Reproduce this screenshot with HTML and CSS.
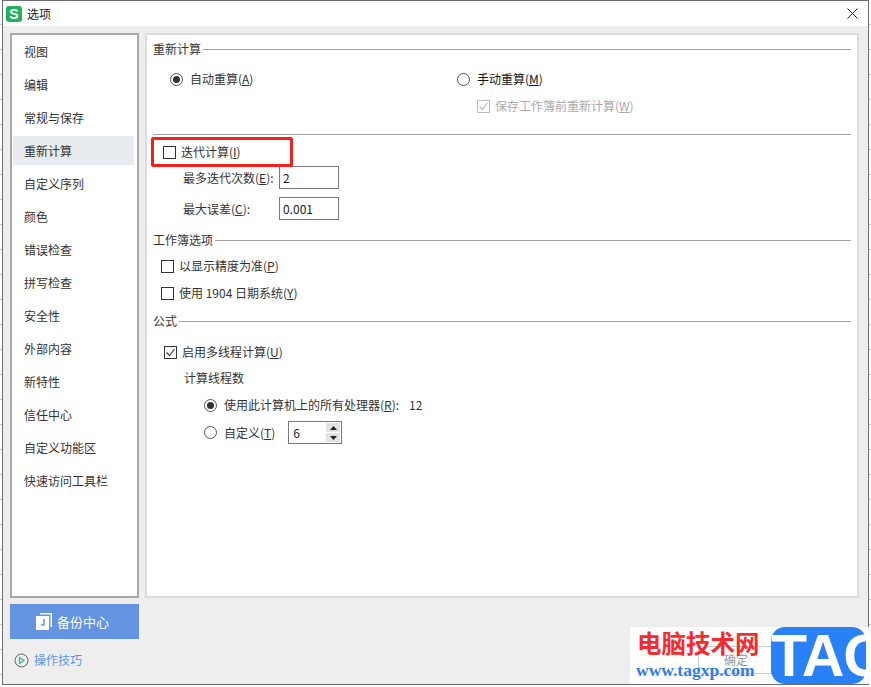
FILE: index.html
```html
<!DOCTYPE html>
<html lang="zh-CN">
<head>
<meta charset="utf-8">
<title>选项</title>
<link rel="stylesheet" href="styles.css">
</head>
<body>
<div class="dialog">
  <header class="titlebar">
    <span class="logo">S</span>
    <span class="title">选项</span>
    <svg class="close" width="11" height="11" viewBox="0 0 11 11"><path d="M.5.5l10 10M10.500.5l-10 10" stroke="#222" stroke-width="1" fill="none"/></svg>
  </header>
  <div class="body">
    <div class="left">
      <nav class="nav">
        <div class="nav-item">视图</div>
        <div class="nav-item">编辑</div>
        <div class="nav-item">常规与保存</div>
        <div class="nav-item active">重新计算</div>
        <div class="nav-item">自定义序列</div>
        <div class="nav-item">颜色</div>
        <div class="nav-item">错误检查</div>
        <div class="nav-item">拼写检查</div>
        <div class="nav-item">安全性</div>
        <div class="nav-item">外部内容</div>
        <div class="nav-item">新特性</div>
        <div class="nav-item">信任中心</div>
        <div class="nav-item">自定义功能区</div>
        <div class="nav-item">快速访问工具栏</div>
      </nav>
      <div class="backup">
        <svg width="16" height="17" viewBox="0 0 16 17"><path d="M4 0h12v14h-1.500V1.500H4z" fill="#fff"/><path d="M0 3h13v14H0z" fill="#fff"/><path d="M8 6v6H5" stroke="#6495e2" stroke-width="1.500" fill="none"/></svg>
        <span>备份中心</span>
      </div>
      <div class="tips">
        <svg width="15" height="15" viewBox="0 0 15 15"><circle cx="7.500" cy="7.500" r="6.500" fill="none" stroke="#666" stroke-width="1"/><path d="M5.500 4.500v6l4.500-3z" fill="none" stroke="#35b87c" stroke-width="1.200"/></svg>
        <span>操作技巧</span>
      </div>
    </div>
    <main class="panel">
      <div class="heading"><span>重新计算</span><i></i></div>
      <div class="row two-col mt10 ind-a">
        <label class="opt"><span class="radio on"></span>自动重算(<u>A</u>)</label>
        <label class="opt strong"><span class="radio"></span>手动重算(<u>M</u>)</label>
      </div>
      <div class="row mt7 ind-b">
        <label class="opt disabled"><span class="check checked dim"><svg width="11" height="11" viewBox="0 0 11 11"><path d="M1.500 5.500l3 3 5-6.500" stroke="#bbb" stroke-width="1.200" fill="none"/></svg></span>保存工作簿前重新计算(<u>W</u>)</label>
      </div>
      <div class="sep"></div>
      <div class="row mt7 ind-c">
        <label class="opt"><span class="check"></span>迭代计算(<u>I</u>)</label>
      </div>
      <div class="field mt4">
        <span class="field-label">最多迭代次数(<u>E</u>):</span>
        <span class="input">2</span>
      </div>
      <div class="field mt8">
        <span class="field-label">最大误差(<u>C</u>):</span>
        <span class="input">0.001</span>
      </div>
      <div class="heading mt10"><span>工作簿选项</span><i></i></div>
      <div class="row mt6 ind-d">
        <label class="opt"><span class="check"></span>以显示精度为准(<u>P</u>)</label>
      </div>
      <div class="row mt7 ind-d">
        <label class="opt"><span class="check"></span>使用 1904 日期系统(<u>Y</u>)</label>
      </div>
      <div class="heading mt8"><span>公式</span><i></i></div>
      <div class="row mt11 ind-e">
        <label class="opt"><span class="check checked"><svg width="11" height="11" viewBox="0 0 11 11"><path d="M1.500 5.500l3 3 5-6.500" stroke="#444" stroke-width="1.200" fill="none"/></svg></span>启用多线程计算(<u>U</u>)</label>
      </div>
      <div class="row mt6 ind-f">计算线程数</div>
      <div class="row mt7 ind-g">
        <label class="opt"><span class="radio on"></span>使用此计算机上的所有处理器(<u>R</u>):<span class="count">12</span></label>
      </div>
      <div class="row spin-row mt6 ind-g">
        <label class="opt"><span class="radio"></span>自定义(<u>T</u>)</label>
        <span class="spin">
          <span class="spin-val">6</span>
          <span class="spin-btns">
            <span class="spin-btn"><svg width="7" height="4" viewBox="0 0 7 4"><path d="M3.500 0L7 4H0z" fill="#222"/></svg></span>
            <span class="spin-btn"><svg width="7" height="4" viewBox="0 0 7 4"><path d="M0 0h7L3.500 4z" fill="#222"/></svg></span>
          </span>
        </span>
      </div>
      <div class="redbox"></div>
    </main>
  </div>
</div>
<div class="watermark">
  <span class="ghost-btn ghost-ok">确定</span>
  <span class="ghost-cancel">取消</span>
  <div class="wm-text">
    <div class="wm-cn">电脑技术网</div>
    <div class="wm-url">www.tagxp.com</div>
  </div>
  <div class="wm-tag">TAG</div>
</div>
</body>
</html>
```
FILE: styles.css
```css
* { box-sizing: border-box; }
html, body { margin: 0; height: 100%; }
body {
  width: 871px;
  height: 687px;
  overflow: hidden;
  position: relative;
  font: 12px/20px "Noto Sans CJK SC", "Noto Sans", sans-serif;
  color: #333;
  padding-left: 2px;
  background-color: #fff;
  background-image:
    repeating-linear-gradient(to bottom, transparent 0 24px, #c8c8c8 24px 25px);
}
u { text-underline-offset: 1px; }

.dialog {
  width: 867px;
  height: 685px;
  border: 1px solid #6e6e6e;
  background: #eee;
  display: flex;
  flex-direction: column;
}
.titlebar {
  height: 25px;
  flex: none;
  background: #fff;
  display: flex;
  align-items: center;
  padding: 0 10px 0 3px;
  margin-bottom: 7px;
}
.logo {
  width: 16px;
  height: 16px;
  border-radius: 3px;
  background: #21b25b;
  color: #fff;
  font: bold 14px/16px "Liberation Sans", sans-serif;
  text-align: center;
}
.title { margin-left: 5px; font-size: 12px; color: #222; }
.close { margin-left: auto; }

.body {
  display: grid;
  grid-template-columns: 129px 714px;
  column-gap: 6px;
  padding-left: 7px;
}
.left { display: flex; flex-direction: column; }
.nav {
  height: 565px;
  background: #fff;
  border: 2px solid #a8a8a8;
  padding: 2px 3px 0 1px;
}
.nav-item {
  height: 29px;
  line-height: 29px;
  margin-bottom: 4px;
  padding-left: 11px;
}
.nav-item.active { background: #e8ebf0; }
.backup {
  height: 35px;
  margin-top: 6px;
  background: #6495e2;
  color: #fff;
  font-size: 13px;
  display: flex;
  align-items: center;
  padding-left: 26px;
  gap: 5px;
}
.tips {
  margin-top: 11px;
  margin-left: 4px;
  display: flex;
  align-items: center;
  gap: 5px;
  color: #5b96e8;
}

.panel {
  height: 565px;
  background: #fff;
  border: 2px solid #dcdcdc;
  padding: 4px 6px 0;
  position: relative;
}
.heading {
  height: 20px;
  display: flex;
  align-items: center;
  gap: 2px;
}
.heading i { flex: 1; height: 1px; background: #a0a0a0; }
.sep { height: 1px; background: #a0a0a0; margin-top: 18px; }
.row { height: 20px; display: flex; align-items: center; }
.two-col { display: grid; grid-template-columns: 287px auto; }
.opt { display: flex; align-items: center; }
.strong { color: #111; }
.disabled { color: #aaa; }

.mt4 { margin-top: 4px; }
.mt6 { margin-top: 6px; }
.mt7 { margin-top: 7px; }
.mt8 { margin-top: 8px; }
.mt10 { margin-top: 10px; }
.mt11 { margin-top: 11px; }
.ind-a { padding-left: 17px; }
.ind-b { padding-left: 324px; }
.ind-c { padding-left: 10px; }
.ind-d { padding-left: 8px; }
.ind-e { padding-left: 11px; }
.ind-f { padding-left: 31px; }
.ind-g { padding-left: 51px; }

.radio {
  width: 13px;
  height: 13px;
  border-radius: 50%;
  border: 1px solid #555;
  margin-right: 7px;
  background: #fff;
  display: inline-flex;
  align-items: center;
  justify-content: center;
  flex: none;
}
.radio.on::after {
  content: "";
  width: 7px;
  height: 7px;
  border-radius: 50%;
  background: #333;
}
.check {
  width: 13px;
  height: 13px;
  border: 1px solid #333;
  margin-right: 5px;
  background: #fff;
  display: inline-flex;
  align-items: center;
  justify-content: center;
  flex: none;
}
.check.dim { border-color: #bbb; }
.count { margin-left: 10px; }

.field { display: flex; align-items: center; height: 23px; padding-left: 30px; }
.field-label { width: 96px; }
.input {
  width: 60px;
  height: 23px;
  border: 1px solid #7a7a7a;
  padding-left: 3px;
  line-height: 21px;
  color: #222;
}
.spin-row { height: 23px; }
.spin {
  margin-left: 13px;
  width: 54px;
  height: 23px;
  border: 1px solid #7a7a7a;
  display: flex;
  justify-content: space-between;
  padding: 1px;
}
.spin-val { padding-left: 3px; line-height: 19px; color: #222; }
.spin-btns { width: 14px; display: flex; flex-direction: column; gap: 1px; }
.spin-btn {
  flex: 1;
  background: #e3e3e3;
  display: flex;
  align-items: center;
  justify-content: center;
}

.redbox {
  position: absolute;
  left: 4px;
  top: 102px;
  width: 142px;
  height: 30px;
  border: 3px solid #f5201c;
  border-radius: 2px;
}

.watermark {
  position: absolute;
  left: 630px;
  top: 627px;
  width: 241px;
  height: 57px;
  background: rgba(255, 255, 255, .9);
}
.ghost-btn {
  position: absolute;
  left: 68px;
  top: 19px;
  width: 76px;
  height: 28px;
  border: 1px solid #bcd4e6;
  text-align: center;
  line-height: 26px;
  color: #999;
}
.ghost-cancel { position: absolute; left: 167px; top: 17px; color: #999; }
.wm-text { position: relative; }
.wm-cn {
  position: absolute;
  left: 7px;
  top: 3px;
  font: bold 24.500px/26px "Noto Sans CJK SC", sans-serif;
  color: #f82a2e;
  white-space: nowrap;
}
.wm-url {
  position: absolute;
  left: 6px;
  top: 32px;
  font: bold 17.500px/22px "Liberation Serif", serif;
  color: #2e7cf0;
  white-space: nowrap;
}
.wm-tag {
  position: absolute;
  right: 5px;
  top: 0;
  width: 95px;
  height: 57px;
  border-radius: 14px;
  background: #2a80f6;
  color: #fff;
  font: bold 59px/58px "Liberation Sans", sans-serif;
  text-align: center;
  letter-spacing: -1px;
}
```
